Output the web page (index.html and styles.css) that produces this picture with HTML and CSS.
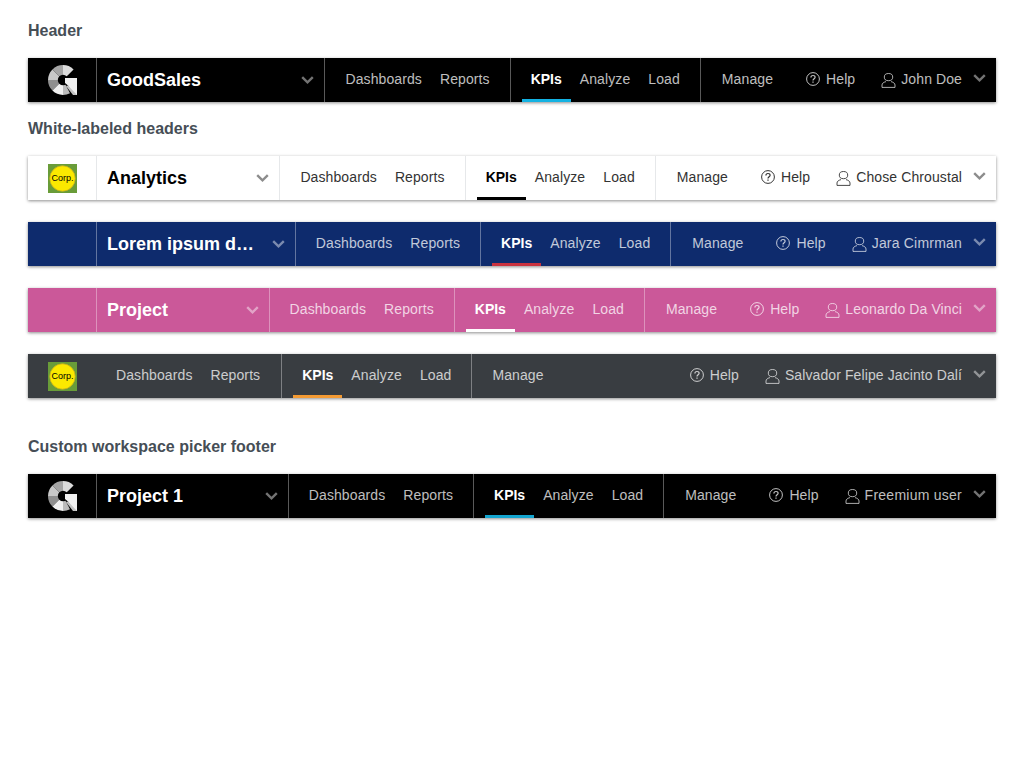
FILE: index.html
```html
<!DOCTYPE html>
<html lang="en">
<head>
<meta charset="utf-8">
<title>Header</title>
<link rel="stylesheet" href="styles.css">
</head>
<body>
<svg class="defs" width="0" height="0" aria-hidden="true">
  <defs>
    <symbol id="g-logo" viewBox="0 0 30 30">
      <path d="M15 15V0A15 15 0 0 0 4.4 4.4Z" fill="#a5a5a5"/>
      <path d="M15 15V0A15 15 0 0 1 25.6 4.4Z" fill="#dcdcdc"/>
      <path d="M15 15L4.4 4.4A15 15 0 0 0 0 15Z" fill="#c8c8c8"/>
      <path d="M15 15H0A15 15 0 0 0 4.4 25.6Z" fill="#8f8f8f"/>
      <path d="M15 15L4.4 25.6A15 15 0 0 0 15 30Z" fill="#f0f0f0"/>
      <path d="M15 15V30A15 15 0 0 0 22 28.3Z" fill="#bbb"/>
      <circle cx="15" cy="15" r="5.2" fill="#000"/>
      <path d="M17 13H29V30H26L20 20.5 17 18Z" fill="#f0f0f0"/>
      <path d="M20 20.5L29 30H25L18 21Z" fill="#c4c4c4"/>
    </symbol>
    <symbol id="corp-logo" viewBox="0 0 29 29">
      <rect width="29" height="29" fill="#699c39"/>
      <circle cx="14.5" cy="14.5" r="12.7" fill="#fbe900" stroke="#c9b01a" stroke-width=".8"/>
    </symbol>
    <symbol id="help" viewBox="0 0 14 14">
      <circle cx="7" cy="7" r="6.4" fill="none" stroke="currentColor"/>
      <path d="M4.9 5.4C4.9 4.2 5.8 3.5 7 3.5S9.1 4.2 9.1 5.3C9.1 6.7 7 6.8 7 8.5" fill="none" stroke="currentColor" stroke-width="1.2"/>
      <rect x="6.4" y="9.5" width="1.2" height="1.3" fill="currentColor"/>
    </symbol>
    <symbol id="user" viewBox="0 0 15 15">
      <ellipse cx="7.5" cy="4.1" rx="4.2" ry="3.6" fill="none" stroke="currentColor" stroke-width=".9"/>
      <path d="M5 8.6C2.8 9.2 1 10.2 1 12V14.4H14V12C14 10.2 12.2 9.2 10 8.6" fill="none" stroke="currentColor" stroke-width=".9"/>
    </symbol>
    <symbol id="chevron" viewBox="0 0 13 8">
      <path d="M1.2 1.2L6.5 6.3L11.8 1.2" fill="none" stroke="currentColor" stroke-width="2.4"/>
    </symbol>
  </defs>
</svg>

<h2 class="title title-first">Header</h2>
<header class="bar bar-black">
  <div class="logo"><svg class="logo-g"><use href="#g-logo"/></svg></div>
  <div class="picker"><span class="picker-name">GoodSales</span><svg class="chev"><use href="#chevron"/></svg></div>
  <nav class="group"><a>Dashboards</a><a>Reports</a></nav>
  <nav class="group"><a class="active">KPIs</a><a>Analyze</a><a>Load</a></nav>
  <nav class="group group-last"><a>Manage</a></nav>
  <div class="right">
    <span class="help"><svg class="ico"><use href="#help"/></svg>Help</span>
    <span class="account"><svg class="ico"><use href="#user"/></svg><span class="account-name">John Doe</span><svg class="chev"><use href="#chevron"/></svg></span>
  </div>
</header>

<h2 class="title title-second">White-labeled headers</h2>
<header class="bar bar-white">
  <div class="logo"><span class="corp"><svg class="corp-bg"><use href="#corp-logo"/></svg><span class="corp-text">Corp.</span></span></div>
  <div class="picker"><span class="picker-name">Analytics</span><svg class="chev"><use href="#chevron"/></svg></div>
  <nav class="group"><a>Dashboards</a><a>Reports</a></nav>
  <nav class="group"><a class="active">KPIs</a><a>Analyze</a><a>Load</a></nav>
  <nav class="group group-last"><a>Manage</a></nav>
  <div class="right">
    <span class="help"><svg class="ico"><use href="#help"/></svg>Help</span>
    <span class="account"><svg class="ico"><use href="#user"/></svg><span class="account-name">Chose Chroustal</span><svg class="chev"><use href="#chevron"/></svg></span>
  </div>
</header>

<header class="bar bar-blue">
  <div class="logo"></div>
  <div class="picker"><span class="picker-name">Lorem ipsum dolor sit amet</span><svg class="chev"><use href="#chevron"/></svg></div>
  <nav class="group"><a>Dashboards</a><a>Reports</a></nav>
  <nav class="group"><a class="active">KPIs</a><a>Analyze</a><a>Load</a></nav>
  <nav class="group group-last"><a>Manage</a></nav>
  <div class="right">
    <span class="help"><svg class="ico"><use href="#help"/></svg>Help</span>
    <span class="account"><svg class="ico"><use href="#user"/></svg><span class="account-name">Jara Cimrman</span><svg class="chev"><use href="#chevron"/></svg></span>
  </div>
</header>

<header class="bar bar-pink">
  <div class="logo"></div>
  <div class="picker"><span class="picker-name">Project</span><svg class="chev"><use href="#chevron"/></svg></div>
  <nav class="group"><a>Dashboards</a><a>Reports</a></nav>
  <nav class="group"><a class="active">KPIs</a><a>Analyze</a><a>Load</a></nav>
  <nav class="group group-last"><a>Manage</a></nav>
  <div class="right">
    <span class="help"><svg class="ico"><use href="#help"/></svg>Help</span>
    <span class="account"><svg class="ico"><use href="#user"/></svg><span class="account-name">Leonardo Da Vinci</span><svg class="chev"><use href="#chevron"/></svg></span>
  </div>
</header>

<header class="bar bar-dark">
  <div class="logo logo-plain"><span class="corp"><svg class="corp-bg"><use href="#corp-logo"/></svg><span class="corp-text">Corp.</span></span></div>
  <nav class="group"><a>Dashboards</a><a>Reports</a></nav>
  <nav class="group"><a class="active">KPIs</a><a>Analyze</a><a>Load</a></nav>
  <nav class="group group-last"><a>Manage</a></nav>
  <div class="right right-push">
    <span class="help"><svg class="ico"><use href="#help"/></svg>Help</span>
    <span class="account"><svg class="ico"><use href="#user"/></svg><span class="account-name">Salvador Felipe Jacinto Dalí</span><svg class="chev"><use href="#chevron"/></svg></span>
  </div>
</header>

<h2 class="title title-third">Custom workspace picker footer</h2>
<header class="bar bar-black bar-cyan">
  <div class="logo"><svg class="logo-g"><use href="#g-logo"/></svg></div>
  <div class="picker"><span class="picker-name">Project 1</span><svg class="chev"><use href="#chevron"/></svg></div>
  <nav class="group"><a>Dashboards</a><a>Reports</a></nav>
  <nav class="group"><a class="active">KPIs</a><a>Analyze</a><a>Load</a></nav>
  <nav class="group group-last"><a>Manage</a></nav>
  <div class="right">
    <span class="help"><svg class="ico"><use href="#help"/></svg>Help</span>
    <span class="account"><svg class="ico"><use href="#user"/></svg><span class="account-name">Freemium user</span><svg class="chev"><use href="#chevron"/></svg></span>
  </div>
</header>
</body>
</html>
```
FILE: styles.css
```css
* { box-sizing: border-box; }
html, body { margin: 0; background: #fff; }
body {
  padding: 0 28px;
  font-family: "Liberation Sans", Arial, sans-serif;
  font-size: 14px;
  overflow: hidden;
  height: 768px;
}
.defs { position: absolute; }

.title {
  margin: 0;
  height: 18px;
  font-size: 16px;
  line-height: 18px;
  font-weight: 700;
  color: #464e56;
}
.title-first { margin-top: 22px; margin-bottom: 18px; }
.title-second { margin-top: 18px; margin-bottom: 18px; }
.title-third { margin-top: 40px; margin-bottom: 18px; }

.bar {
  --sep: rgba(255, 255, 255, .35);
  --text: rgba(255, 255, 255, .75);
  --strong: #fff;
  --accent: #14b2e2;
  --chev: rgba(255, 255, 255, .45);
  display: flex;
  align-items: stretch;
  height: 44px;
  margin-bottom: 22px;
  color: var(--text);
  box-shadow: 0 1px 3px rgba(0, 0, 0, .45);
  letter-spacing: .1px;
}
.title + .bar { margin-bottom: 0; }
.title-second + .bar { margin-bottom: 22px; }
.bar-black { background: #000; }
.bar-cyan { --accent: #14a5cf; }
.bar-white {
  background: #fff;
  --sep: #e6e8ea;
  --text: #333;
  --strong: #000;
  --accent: #000;
  --chev: rgba(0, 0, 0, .45);
}
.bar-blue { background: #0e2b6d; --accent: #c9323f; }
.bar-pink { background: #cb5899; --accent: #fff; }
.bar-dark { background: #393d41; --accent: #f39a33; margin-bottom: 0; }
.bar-blue .account-name { letter-spacing: .2px; }
.bar-cyan .account-name { letter-spacing: .25px; }

.logo {
  flex: none;
  width: 69px;
  display: flex;
  align-items: center;
  padding-left: 20px;
  border-right: 1px solid var(--sep);
}
.logo-plain { width: 68px; border-right: 0; }
.logo-g { width: 30px; height: 30px; }
.corp { position: relative; width: 29px; height: 29px; display: block; }
.corp-bg { display: block; width: 29px; height: 29px; }
.corp-text {
  position: absolute;
  inset: 0;
  display: flex;
  align-items: center;
  justify-content: center;
  font-size: 9px;
  letter-spacing: 0;
  color: #000;
}

.picker {
  flex: 1 1 0;
  min-width: 0;
  display: flex;
  align-items: center;
  padding: 0 10px;
  border-right: 1px solid var(--sep);
}
.picker-name {
  flex: 1;
  min-width: 0;
  overflow: hidden;
  white-space: nowrap;
  text-overflow: ellipsis;
  font-size: 18px;
  font-weight: 700;
  letter-spacing: 0;
  color: var(--strong);
}
.chev { flex: none; width: 13px; height: 8px; color: var(--chev); }
.picker .chev { margin-left: 15px; }

.group {
  flex: none;
  display: flex;
  padding: 0 11px;
  border-right: 1px solid var(--sep);
}
.group-last { border-right: 0; padding-left: 12px; }
.logo-plain + .group { padding-right: 12px; }
.bar-dark .group-last { padding-left: 11px; }
.group a {
  position: relative;
  display: flex;
  align-items: center;
  padding: 0 9px 2px;
  white-space: nowrap;
}
.group a.active { color: var(--strong); font-weight: 700; letter-spacing: 0; }
.group a.active::after {
  content: "";
  position: absolute;
  left: 0;
  right: 0;
  bottom: 0;
  height: 3px;
  background: var(--accent);
}

.right {
  flex: none;
  display: flex;
  align-items: center;
  padding: 0 10px 2px 13px;
}
.right-push { margin-left: auto; }
.help, .account { display: flex; align-items: center; white-space: nowrap; }
.help { margin-right: 26px; }
.ico { flex: none; width: 14px; height: 14px; margin-right: 6px; }
.account .ico { width: 15px; height: 15px; margin-right: 5px; margin-top: 2px; }
.account .chev { margin-left: 11px; margin-top: -2px; }
```
